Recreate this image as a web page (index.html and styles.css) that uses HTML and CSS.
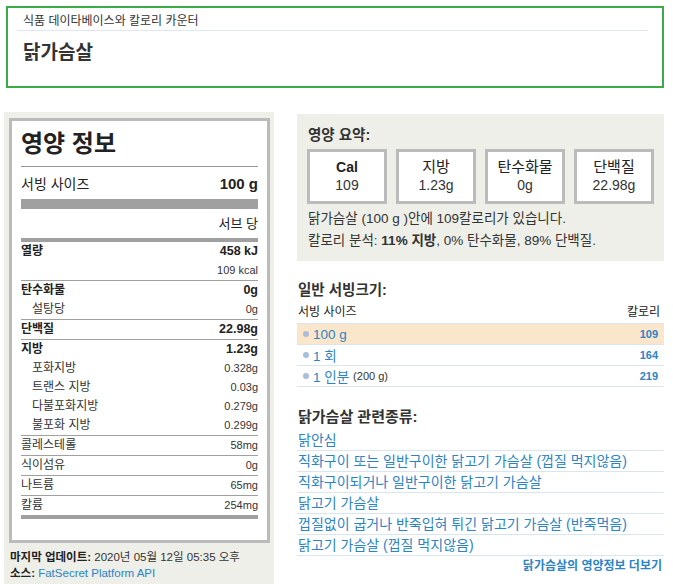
FILE: index.html
```html
<!DOCTYPE html>
<html lang="ko">
<head>
<meta charset="utf-8">
<title>닭가슴살</title>
<link rel="stylesheet" href="styles.css">
</head>
<body>
<div class="top">
  <div class="crumb"><span>식품 데이타베이스와 칼로리 카운터</span></div>
  <h1 class="food-title">닭가슴살</h1>
</div>
<div class="main">
  <aside class="left">
    <div class="label">
      <div class="label-title">영양 정보</div>
      <div class="serving"><span>서빙 사이즈</span><b>100 g</b></div>
      <div class="bar-thick"></div>
      <div class="per">서브 당</div>
      <div class="bar-mid"></div>
      <div class="row"><b class="k">열량</b><b class="v">458 kJ</b></div>
      <div class="row"><span></span><span>109 kcal</span></div>
      <div class="row line"><b class="k">탄수화물</b><b class="v">0g</b></div>
      <div class="row ind"><span>설탕당</span><span>0g</span></div>
      <div class="row line"><b class="k">단백질</b><b class="v">22.98g</b></div>
      <div class="row line"><b class="k">지방</b><b class="v">1.23g</b></div>
      <div class="row ind"><span>포화지방</span><span>0.328g</span></div>
      <div class="row ind"><span>트랜스 지방</span><span>0.03g</span></div>
      <div class="row ind"><span>다불포화지방</span><span>0.279g</span></div>
      <div class="row ind"><span>불포화 지방</span><span>0.299g</span></div>
      <div class="row line"><span>콜레스테롤</span><span>58mg</span></div>
      <div class="row line"><span>식이섬유</span><span>0g</span></div>
      <div class="row line"><span>나트륨</span><span>65mg</span></div>
      <div class="row line"><span>칼륨</span><span>254mg</span></div>
      <div class="bar-end"></div>
    </div>
    <div class="meta">
      <div><b>마지막 업데이트:</b> 2020년 05월 12일 05:35 오후</div>
      <div><b>소스:</b> <a class="link" href="#">FatSecret Platform API</a></div>
    </div>
  </aside>
  <section class="right">
    <div class="summary">
      <div class="sec-head">영양 요약:</div>
      <div class="boxes">
        <div class="box"><b>Cal</b><span>109</span></div>
        <div class="box"><span class="bl">지방</span><span>1.23g</span></div>
        <div class="box"><span class="bl">탄수화물</span><span>0g</span></div>
        <div class="box"><span class="bl">단백질</span><span>22.98g</span></div>
      </div>
      <p class="sent">닭가슴살 (100 g )안에 109칼로리가 있습니다.</p>
      <p class="sent">칼로리 분석: <b>11% 지방</b>, 0% 탄수화물, 89% 단백질.</p>
    </div>

    <div class="sec-head plain">일반 서빙크기:</div>
    <div class="srv-head"><span>서빙 사이즈</span><span>칼로리</span></div>
    <div class="srv-row hl"><a class="link srv-name" href="#"><i class="dot"></i>100 g</a><a class="link cal" href="#">109</a></div>
    <div class="srv-row"><a class="link srv-name" href="#"><i class="dot"></i>1 회</a><a class="link cal" href="#">164</a></div>
    <div class="srv-row"><span class="srv-name"><i class="dot"></i><a class="link" href="#">1 인분</a> <small>(200 g)</small></span><a class="link cal" href="#">219</a></div>

    <div class="sec-head plain rel">닭가슴살 관련종류:</div>
    <ul class="related">
      <li><a class="link" href="#">닭안심</a></li>
      <li><a class="link" href="#">직화구이 또는 일반구이한 닭고기 가슴살 (껍질 먹지않음)</a></li>
      <li><a class="link" href="#">직화구이되거나 일반구이한 닭고기 가슴살</a></li>
      <li><a class="link" href="#">닭고기 가슴살</a></li>
      <li><a class="link" href="#">껍질없이 굽거나 반죽입혀 튀긴 닭고기 가슴살 (반죽먹음)</a></li>
      <li><a class="link" href="#">닭고기 가슴살 (껍질 먹지않음)</a></li>
    </ul>
    <div class="more"><a class="link" href="#">닭가슴살의 영양정보 더보기</a></div>
  </section>
</div>
</body>
</html>
```

FILE: styles.css
```css
* { box-sizing: border-box; }
html, body { margin: 0; padding: 0; background: #fff; }
body {
  font-family: "Liberation Sans", "Noto Sans CJK KR", sans-serif;
  color: #333;
  font-size: 12px;
  width: 673px;
  height: 584px;
  overflow: hidden;
}
a { text-decoration: none; }
.link { color: #2b84c6; }

/* header */
.top {
  margin: 6px 9px 0 6px;
  height: 82px;
  border: 2px solid #3aac47;
}
.crumb {
  margin: 0 14px 0 9px;
  padding: 6px 0 2px 6px;
  line-height: 14px;
  font-size: 12px;
  border-bottom: 1px solid #dfe8f2;
}
.food-title {
  margin: 10px 0 0 15px;
  font-size: 19px;
  line-height: 24px;
  font-weight: bold;
  color: #333;
}

/* layout */
.main {
  display: flex;
  margin-top: 24px;
  padding-left: 4px;
  gap: 23px;
}
.left {
  width: 270px;
  flex: none;
  background: #eeefe9;
  padding: 6px 4px 10px 5px;
  height: 480px;
}
.right {
  width: 367px;
  flex: none;
  margin-top: 2px;
}

/* nutrition label */
.label {
  background: #fff;
  border: 3px solid #bbb;
  padding: 0 9px 21px 9px;
}
.label-title {
  padding-top: 8px;
  padding-bottom: 7px;
  font-size: 24px;
  line-height: 30px;
  font-weight: bold;
  color: #222;
  border-bottom: 1px solid #999;
}
.serving {
  display: flex;
  justify-content: space-between;
  align-items: center;
  height: 32px;
  font-size: 14px;
  color: #222;
}
.serving b { font-size: 15px; }
.bar-thick { height: 10px; background: #a0a0a0; }
.per {
  height: 29px;
  line-height: 29px;
  text-align: right;
  font-size: 13px;
  color: #222;
}
.bar-mid { height: 4px; background: #a0a0a0; }
.bar-end { height: 4px; background: #a0a0a0; }
.row {
  display: flex;
  justify-content: space-between;
  height: 19px;
  line-height: 19px;
  font-size: 12px;
  color: #333;
}
.row > span:last-child { font-size: 11px; }
.row.line { border-top: 1px solid #a0a0a0; height: 20px; }
.row .k { font-size: 12px; color: #222; }
.row .v { font-size: 12.5px; color: #222; }
.row.ind > span:first-child { padding-left: 11px; }

.meta {
  margin-top: 6px;
  padding-left: 1px;
  font-size: 11.5px;
  line-height: 16px;
  color: #333;
}
.meta b { color: #222; }

/* summary */
.summary {
  background: #eeefe9;
  padding: 12px 10px 9px 10px;
}
.sec-head {
  font-size: 14.5px;
  line-height: 18px;
  font-weight: bold;
  color: #333;
  padding-left: 1px;
}
.boxes {
  display: flex;
  gap: 9px;
  margin-top: 5px;
}
.box {
  width: 80px;
  height: 55px;
  background: #fff;
  border: 3px solid #bbb;
  display: flex;
  flex-direction: column;
  align-items: center;
  padding-top: 6px;
  font-size: 14px;
  line-height: 18px;
  color: #333;
}
.box b { color: #222; }
.box .bl { color: #222; font-size: 15px; }
.sent {
  margin: 0;
  font-size: 13.5px;
  line-height: 22px;
  padding-left: 1px;
}
.summary .boxes + .sent { margin-top: 4px; }

/* common servings */
.sec-head.plain {
  margin-top: 19px;
  line-height: 20px;
  padding-left: 1px;
}
.srv-head {
  margin-top: 2px;
  display: flex;
  justify-content: space-between;
  font-size: 12px;
  line-height: 21px;
  padding: 0 4px 0 1px;
  border-bottom: 1px solid #dbe5f0;
  color: #222;
}
.srv-row {
  display: flex;
  justify-content: space-between;
  align-items: center;
  height: 21px;
  border-bottom: 1px solid #dbe5f0;
  padding: 0 6px 0 6px;
}
.srv-row.hl { background: #fae6ca; }
.srv-name {
  display: flex;
  align-items: center;
  font-size: 13.5px;
  color: #2b84c6;
}
.srv-name small { font-size: 11px; color: #333; margin-left: 4px; }
.dot {
  display: inline-block;
  width: 6px;
  height: 6px;
  border-radius: 50%;
  background: #a9bdd8;
  margin-right: 4px;
}
.cal { font-size: 11px; font-weight: bold; }

/* related */
.sec-head.rel { margin-top: 20px; font-size: 15px; }
.related {
  list-style: none;
  margin: 3px 0 0 0;
  padding: 0;
}
.related li {
  height: 21px;
  line-height: 20px;
  font-size: 14px;
  border-bottom: 1px solid #dbe5f0;
  padding-left: 1px;
}
.more {
  text-align: right;
  font-size: 12px;
  font-weight: bold;
  line-height: 20px;
  padding-right: 2px;
}
```
